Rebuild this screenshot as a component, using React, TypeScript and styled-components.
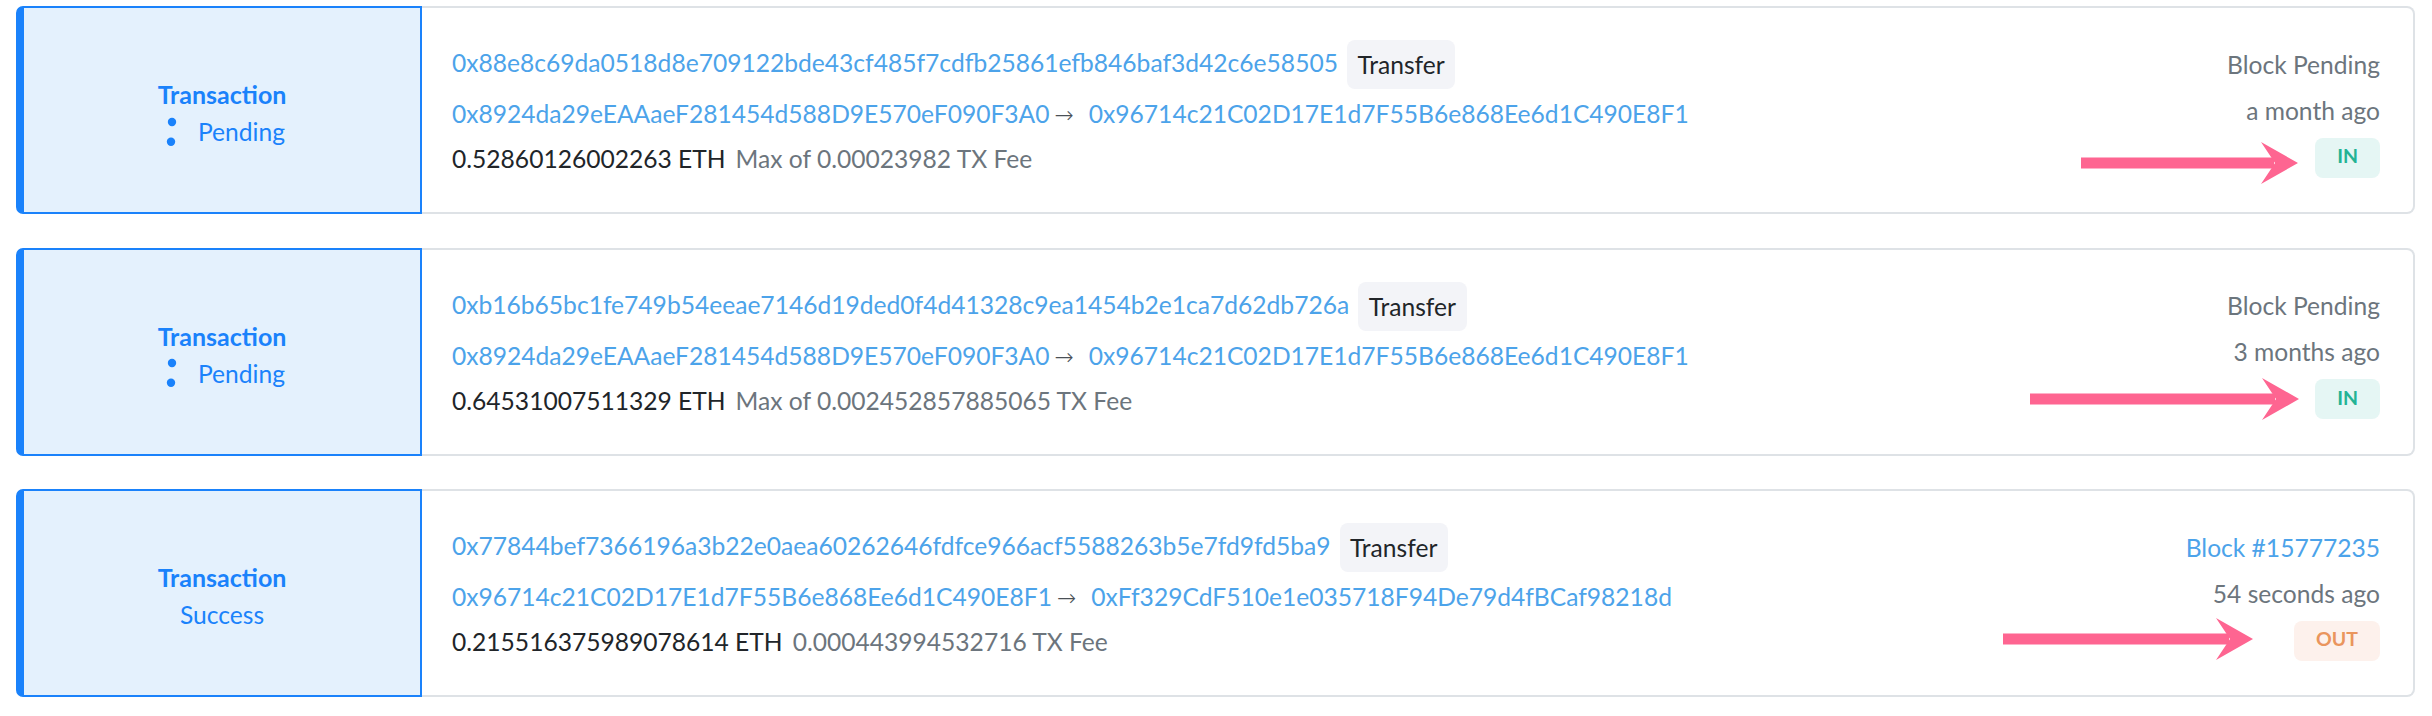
import React from "react";
import styled, { createGlobalStyle, css } from "styled-components";

const GlobalStyle = createGlobalStyle`
  html, body { margin: 0; padding: 0; background: #ffffff; }
  body { font-family: Lato, "Noto Sans", sans-serif; font-size: 24.6px; color: #212529; }
`;

const Page = styled.div`
  display: flex;
  flex-direction: column;
  gap: 33.5px;
  padding: 6px 17px 0 16px;
`;

const Card = styled.div`
  position: relative;
  display: flex;
  height: 208px;
`;

const StatusBox = styled.div`
  box-sizing: border-box;
  flex: 0 0 406px;
  display: flex;
  flex-direction: column;
  align-items: center;
  justify-content: center;
  padding-top: 6px;
  background: #e4f1fd;
  border: 2px solid #1a82fb;
  border-left-width: 8px;
  border-radius: 7px 0 0 7px;
  color: #1a82fb;
`;

const StatusTitle = styled.div`
  font-size: 25px;
  font-weight: 700;
  line-height: 37px;
`;

const StatusState = styled.div`
  display: flex;
  align-items: center;
  gap: 15px;
  line-height: 37px;
  font-size: 24.6px;
`;

const Content = styled.div`
  box-sizing: border-box;
  flex: 1;
  display: flex;
  align-items: flex-start;
  padding: 32px 33px 0 30px;
  border: 2px solid #dee2e6;
  border-left: none;
  border-radius: 0 8px 8px 0;
`;

const Details = styled.div`
  flex: 1;
  display: flex;
  flex-direction: column;
  gap: 6px;
`;

const HashRow = styled.div`
  display: flex;
  align-items: center;
  height: 49px;
`;

const Link = styled.a`
  color: #4ca3ea;
  text-decoration: none;
  white-space: nowrap;
`;

const HashLink = styled(Link)`
  padding-bottom: 4px;
`;

const TypeBadge = styled.span`
  box-sizing: border-box;
  display: inline-flex;
  align-items: center;
  height: 49px;
  margin-left: 9px;
  padding: 0 10.5px;
  border-radius: 8px;
  background: #f3f4f8;
  color: #212529;
`;

const Line = styled.div`
  display: flex;
  align-items: baseline;
  line-height: 37px;
  white-space: nowrap;
`;

const ArrowSep = styled.span`
  font-family: "DejaVu Sans", sans-serif;
  font-size: 23px;
  font-weight: 300;
  color: #4a5056;
  padding: 0 15px 0 5px;
`;

const Amount = styled.span`
  color: #212529;
`;

const Fee = styled.span`
  margin-left: 10px;
  color: #6c757d;
`;

const Meta = styled.div`
  display: flex;
  flex-direction: column;
  align-items: flex-end;
  gap: 9px;
  padding-top: 5.5px;
  line-height: 37px;
  white-space: nowrap;
`;

const MetaText = styled.span<{ $link?: boolean }>`
  color: ${(p) => (p.$link ? "#4ca3ea" : "#6c757d")};
`;

const DirBadge = styled.span<{ $dir: "in" | "out" }>`
  box-sizing: border-box;
  display: inline-flex;
  align-items: center;
  height: 40px;
  padding: 0 22px 4px;
  border-radius: 8px;
  font-size: 19.5px;
  font-weight: 700;
  ${(p) =>
    p.$dir === "in"
      ? css`
          background: #e5f6f4;
          color: #24b394;
        `
      : css`
          background: #fdf1ec;
          color: #ea955d;
        `}
`;

const Annotation = styled.svg<{ $right: number; $top: number }>`
  position: absolute;
  right: ${(p) => p.$right}px;
  top: ${(p) => p.$top}px;
  height: 42px;
  overflow: visible;
  pointer-events: none;
`;

function PinkArrow({ width, right, top }: { width: number; right: number; top: number }) {
  const w = width;
  return (
    <Annotation $right={right} $top={top} width={w} viewBox={`0 0 ${w} 42`}>
      <rect x={0} y={15.5} width={w - 24} height={11} fill="#fe6591" />
      <path d={`M ${w} 21 L ${w - 37} 0 L ${w - 23} 21 L ${w - 37} 42 Z`} fill="#fe6591" />
    </Annotation>
  );
}

function Spinner() {
  return (
    <svg width="24" height="30" viewBox="0 0 24 30">
      <circle cx="13" cy="5" r="4.2" fill="#1a82fb" />
      <circle cx="12" cy="24.7" r="4.2" fill="#1a82fb" />
    </svg>
  );
}

type Tx = {
  hash: string;
  from: string;
  to: string;
  amount: string;
  fee: string;
  pending: boolean;
  block: string;
  time: string;
  dir: "in" | "out";
  arrow: { width: number; right: number; top: number };
};

const txs: Tx[] = [
  {
    hash: "0x88e8c69da0518d8e709122bde43cf485f7cdfb25861efb846baf3d42c6e58505",
    from: "0x8924da29eEAAaeF281454d588D9E570eF090F3A0",
    to: "0x96714c21C02D17E1d7F55B6e868Ee6d1C490E8F1",
    amount: "0.52860126002263 ETH",
    fee: "Max of 0.00023982 TX Fee",
    pending: true,
    block: "Block Pending",
    time: "a month ago",
    dir: "in",
    arrow: { width: 217, right: 117, top: 135.5 },
  },
  {
    hash: "0xb16b65bc1fe749b54eeae7146d19ded0f4d41328c9ea1454b2e1ca7d62db726a",
    from: "0x8924da29eEAAaeF281454d588D9E570eF090F3A0",
    to: "0x96714c21C02D17E1d7F55B6e868Ee6d1C490E8F1",
    amount: "0.64531007511329 ETH",
    fee: "Max of 0.002452857885065 TX Fee",
    pending: true,
    block: "Block Pending",
    time: "3 months ago",
    dir: "in",
    arrow: { width: 269, right: 116, top: 130 },
  },
  {
    hash: "0x77844bef7366196a3b22e0aea60262646fdfce966acf5588263b5e7fd9fd5ba9",
    from: "0x96714c21C02D17E1d7F55B6e868Ee6d1C490E8F1",
    to: "0xFf329CdF510e1e035718F94De79d4fBCaf98218d",
    amount: "0.215516375989078614 ETH",
    fee: "0.000443994532716 TX Fee",
    pending: false,
    block: "Block #15777235",
    time: "54 seconds ago",
    dir: "out",
    arrow: { width: 250, right: 162, top: 128.5 },
  },
];

export default function App() {
  return (
    <>
      <GlobalStyle />
      <Page>
        {txs.map((tx) => (
          <Card key={tx.hash}>
            <StatusBox>
              <StatusTitle>Transaction</StatusTitle>
              <StatusState>
                {tx.pending && <Spinner />}
                <span>{tx.pending ? "Pending" : "Success"}</span>
              </StatusState>
            </StatusBox>
            <Content>
              <Details>
                <HashRow>
                  <HashLink href="#">{tx.hash}</HashLink>
                  <TypeBadge>Transfer</TypeBadge>
                </HashRow>
                <Line>
                  <Link href="#">{tx.from}</Link>
                  <ArrowSep>→</ArrowSep>
                  <Link href="#">{tx.to}</Link>
                </Line>
                <Line>
                  <Amount>{tx.amount}</Amount>
                  <Fee>{tx.fee}</Fee>
                </Line>
              </Details>
              <Meta>
                <MetaText $link={!tx.pending}>{tx.block}</MetaText>
                <MetaText>{tx.time}</MetaText>
                <DirBadge $dir={tx.dir}>{tx.dir === "in" ? "IN" : "OUT"}</DirBadge>
              </Meta>
            </Content>
            <PinkArrow {...tx.arrow} />
          </Card>
        ))}
      </Page>
    </>
  );
}
